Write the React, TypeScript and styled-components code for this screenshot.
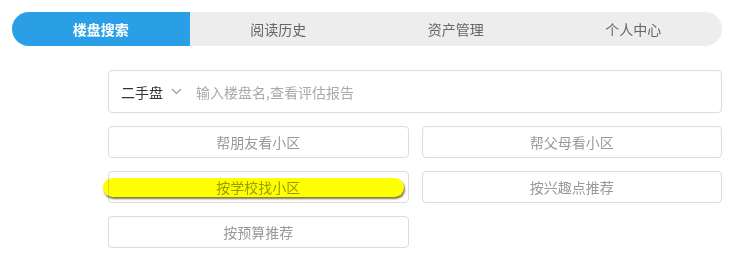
import React, { useState } from "react";
import styled, { createGlobalStyle } from "styled-components";

const primaryColor = "#2a9fe6";
const borderColor = "#dcdcdc";

const GlobalStyle = createGlobalStyle`
  body {
    margin: 0;
    background: #fff;
    font-family: "Noto Sans CJK SC", "Noto Sans", sans-serif;
  }
`;

const Page = styled.div`
  width: 745px;
  padding: 12px 23px 0 12px;
  box-sizing: border-box;
`;

const TabBar = styled.div`
  display: grid;
  grid-template-columns: repeat(4, 1fr);
  height: 34px;
  border-radius: 17px;
  background: #ededed;
  overflow: hidden;
`;

const Tab = styled.div<{ $active?: boolean }>`
  display: flex;
  align-items: center;
  justify-content: center;
  font-size: 14px;
  color: ${(p) => (p.$active ? "#fff" : "#666")};
  background: ${(p) => (p.$active ? primaryColor : "transparent")};
  font-weight: ${(p) => (p.$active ? 700 : 400)};
  cursor: pointer;
`;

const Content = styled.div`
  margin: 24px 0 0 96px;
  display: flex;
  flex-direction: column;
  gap: 13px;
`;

const SearchBox = styled.div`
  height: 43px;
  border: 1px solid ${borderColor};
  border-radius: 4px;
  box-sizing: border-box;
  display: flex;
  align-items: center;
  padding: 0 12px;
  font-size: 14px;
`;

const TypeSelect = styled.div`
  display: flex;
  align-items: center;
  gap: 8px;
  color: #333;
  margin-right: 14px;
`;

const SearchInput = styled.input`
  flex: 1;
  border: none;
  outline: none;
  font: inherit;
  font-size: 14px;
  color: #333;
  padding: 0;

  &::placeholder {
    color: #aaa;
  }
`;

const ButtonGrid = styled.div`
  display: grid;
  grid-template-columns: 1fr 1fr;
  column-gap: 13px;
  row-gap: 13px;
`;

const OptionButton = styled.div`
  position: relative;
  height: 32px;
  border: 1px solid ${borderColor};
  border-radius: 4px;
  box-sizing: border-box;
  display: flex;
  align-items: center;
  justify-content: center;
  font-size: 14px;
  color: #999;
  cursor: pointer;
`;

const Highlight = styled.span`
  position: absolute;
  left: -6px;
  right: 4px;
  top: 6px;
  height: 19px;
  border-radius: 10px;
  background: #ffff00;
  mix-blend-mode: multiply;
  box-shadow: 1px 2px 2px rgba(90, 80, 0, 0.75);
  pointer-events: none;
`;

const tabs = ["楼盘搜索", "阅读历史", "资产管理", "个人中心"];
const options = [
  "帮朋友看小区",
  "帮父母看小区",
  "按学校找小区",
  "按兴趣点推荐",
  "按预算推荐",
];

export default function App() {
  const [active, setActive] = useState(0);
  return (
    <Page>
      <GlobalStyle />
      <TabBar>
        {tabs.map((t, i) => (
          <Tab key={t} $active={i === active} onClick={() => setActive(i)}>
            {t}
          </Tab>
        ))}
      </TabBar>
      <Content>
        <SearchBox>
          <TypeSelect>
            二手盘
            <svg width="11" height="7" viewBox="0 0 11 7" fill="none">
              <path d="M1 1l4.5 4.5L10 1" stroke="#999" strokeWidth="1.1" />
            </svg>
          </TypeSelect>
          <SearchInput placeholder="输入楼盘名,查看评估报告" />
        </SearchBox>
        <ButtonGrid>
          {options.map((o) => (
            <OptionButton key={o}>
              {o === "按学校找小区" && <Highlight />}
              {o}
            </OptionButton>
          ))}
        </ButtonGrid>
      </Content>
    </Page>
  );
}
